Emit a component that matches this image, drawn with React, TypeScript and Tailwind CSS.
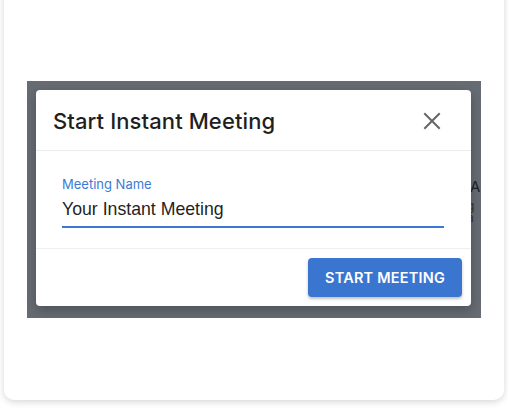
const App = () => {
  return (
    <div className="w-[508px] h-[408px] bg-white overflow-hidden px-1" style={{ fontFamily: "Inter, 'Open Sans', sans-serif" }}>
      <div className="-mt-4 h-[416px] rounded-[10px] bg-white shadow-[0_2px_7px_rgba(0,0,0,0.16)] pt-[97px] pl-[23px]">
        {/* screenshot of the dialog */}
        <div className="relative w-[454px] h-[237px] bg-[#676b74] overflow-hidden pt-[9px] pl-[9px]">
          <div className="absolute right-0 top-[98px] w-[10px] text-[#222] text-[15px] leading-none">
            <div className="ml-[-1px]">A</div>
            <div className="mt-[6px] ml-[-4px] text-[12px] text-[#333]">g a</div>
          </div>
          <div className="relative w-[435px] h-[216px] bg-white rounded-[4px] flex flex-col shadow-[0_4px_12px_rgba(0,0,0,0.25)]">
            <div className="h-[61px] flex items-center justify-between pl-[17px] pr-[30px] pt-[2px] border-b border-[#ececec]">
              <span className="text-[22px] font-medium text-[#1f1f1f] tracking-[0.1px]">Start Instant Meeting</span>
              <svg width="18" height="18" viewBox="0 0 18 18" className="text-[#666]">
                <path d="M2 2L16 16M16 2L2 16" stroke="currentColor" strokeWidth="2" strokeLinecap="square" />
              </svg>
            </div>
            <div className="h-[98px] pl-[26px] pr-[27px] pt-[25px] border-b border-[#efefef]">
              <div className="text-[13px] leading-[16px] text-[#3b7bd6]">Meeting Name</div>
              <div className="mt-[6px] pb-[6px] text-[17.7px] leading-[22px] text-[#1f1f1f] border-b-2 border-[#3b78d3]" style={{ fontFamily: "'Liberation Sans', Arial, sans-serif" }}>Your Instant Meeting</div>
            </div>
            <div className="flex-1 flex items-center justify-end pr-[9px]">
              <button className="w-[154px] h-[39px] rounded-[4px] bg-[#3a76d0] text-white text-[14.5px] font-semibold tracking-[0.2px] shadow-[0_2px_3px_rgba(0,0,0,0.25)]">
                START MEETING
              </button>
            </div>
          </div>
        </div>
      </div>
    </div>
  );
};

export default App;
